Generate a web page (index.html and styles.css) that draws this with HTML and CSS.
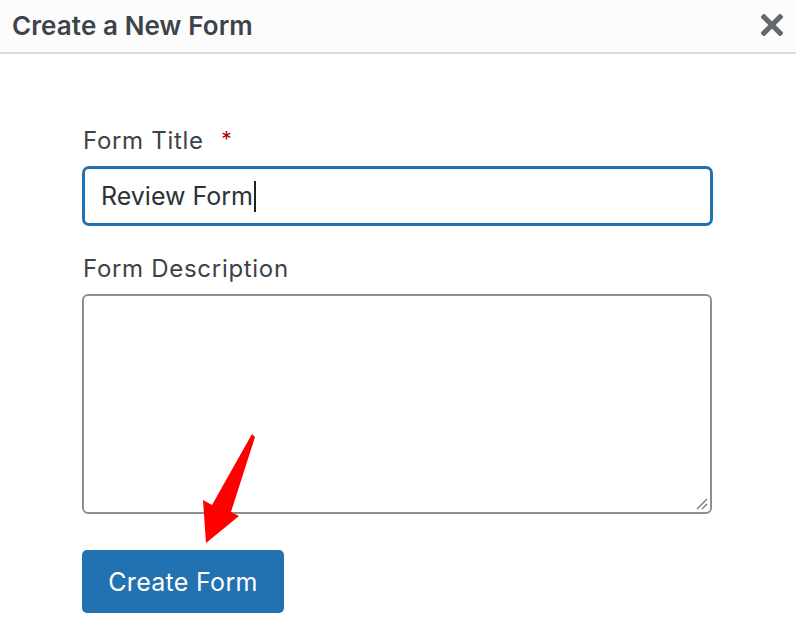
FILE: index.html
```html
<!DOCTYPE html>
<html>
<head>
<meta charset="utf-8">
<link rel="stylesheet" href="styles.css">
</head>
<body>
<div class="modal">
  <div class="modal-header">
    <h1 class="modal-title">Create a New Form</h1>
    <button class="close" aria-label="Close">
      <svg width="22" height="22" viewBox="0 0 22 22"><path d="M3 3 L19 19 M19 3 L3 19" stroke="#646970" stroke-width="5.2" stroke-linecap="square"/></svg>
    </button>
  </div>
  <div class="modal-body">
    <div class="field">
      <label class="label">Form Title <span class="req">*</span></label>
      <div class="input"><span>Review Form</span><span class="caret"></span></div>
    </div>
    <div class="field">
      <label class="label">Form Description</label>
      <div class="textarea">
        <svg class="grip" width="12" height="12" viewBox="0 0 12 12"><path d="M1 11 L11 1 M6 11 L11 6" stroke="#70757a" stroke-width="1.3"/></svg>
      </div>
    </div>
    <div class="actions">
      <button class="btn">Create Form</button>
      <svg class="arrow" width="60" height="115" viewBox="0 0 60 115"><polygon points="50,0 53,3 29,78 37,82 4,109 1,66 10,71" fill="#ff0000"/></svg>
    </div>
  </div>
</div>
</body>
</html>
```
FILE: styles.css
```css
* { box-sizing: border-box; }
body {
  margin: 0;
  background: #fff;
  font-family: "Inter", "Noto Sans", sans-serif;
  color: #3c434a;
}
.modal { width: 796px; height: 630px; overflow: hidden; }
.modal-header {
  height: 54px;
  background: #fcfcfc;
  border-bottom: 2px solid #dcdcde;
  display: flex;
  align-items: center;
  justify-content: space-between;
  padding: 0 13px 2px 12px;
}
.modal-title {
  margin: 0;
  font-size: 26px;
  font-weight: 600;
  color: #3c434a;
  letter-spacing: 0.1px;
}
.close {
  border: 0;
  background: none;
  padding: 0;
  width: 22px;
  height: 22px;
  display: flex;
}
.modal-body {
  padding: 72px 83px 0 82px;
  display: flex;
  flex-direction: column;
}
.field { display: flex; flex-direction: column; }
.label {
  display: block;
  height: 30px;
  font-size: 24px;
  letter-spacing: 0.7px;
  line-height: 30px;
  padding-left: 1px;
  margin-bottom: 10px;
  color: #3c434a;
}
.req {
  color: #a00;
  margin-left: 10px;
  font-size: 21px;
  line-height: 1;
  vertical-align: 2px;
}
.input {
  height: 60px;
  border: 3px solid #2271b1;
  border-radius: 7px;
  display: flex;
  align-items: center;
  padding-left: 16px;
  font-size: 25px;
  color: #2c3338;
  margin-bottom: 28px;
}
.caret {
  display: inline-block;
  width: 2px;
  height: 31px;
  background: #1d2327;
  margin-left: 1px;
}
.textarea {
  height: 220px;
  border: 2px solid #8c8f94;
  border-radius: 6px;
  position: relative;
  margin-right: 1px;
  margin-bottom: 36px;
}
.grip { position: absolute; right: 2px; bottom: 2px; }
.actions { position: relative; }
.btn {
  width: 202px;
  height: 63px;
  background: #2271b1;
  color: #fff;
  border: 0;
  border-radius: 5px;
  font-family: inherit;
  font-size: 25px;
  letter-spacing: 0.3px;
  padding: 0;
}
.arrow { position: absolute; left: 120px; top: -116px; }
```
